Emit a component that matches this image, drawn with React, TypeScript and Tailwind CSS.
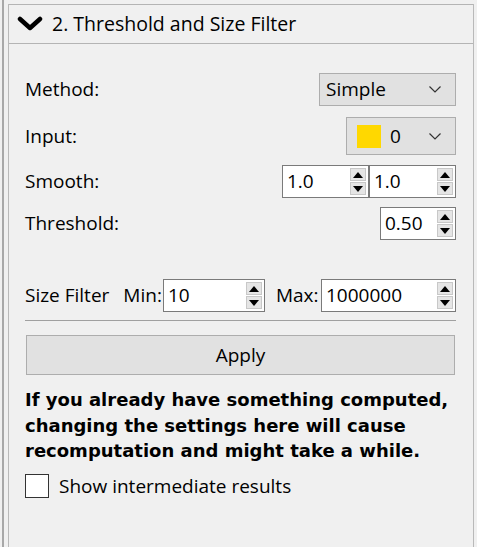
import React from 'react';

const UI = { fontFamily: '"Open Sans", "Noto Sans", sans-serif' };

function SpinButtons() {
  return (
    <div className="flex flex-col w-[18px] h-full py-[2px] pr-[2px] gap-[1px]">
      <div className="flex-1 flex items-center justify-center bg-[#e5e5e5] border border-[#c8c8c8]">
        <svg width="10" height="6" viewBox="0 0 10 6">
          <polygon points="0,6 5,0 10,6" fill="#000" />
        </svg>
      </div>
      <div className="flex-1 flex items-center justify-center bg-[#e5e5e5] border border-[#c8c8c8]">
        <svg width="10" height="6" viewBox="0 0 10 6">
          <polygon points="0,0 10,0 5,6" fill="#000" />
        </svg>
      </div>
    </div>
  );
}

function SpinBox({ value, width }: { value: string; width: string }) {
  return (
    <div className={`flex shrink-0 items-center h-[33px] bg-white border border-[#7a7a7a] ${width}`}>
      <span className="flex-1 pl-[4px] text-[19px] text-black" style={UI}>
        {value}
      </span>
      <SpinButtons />
    </div>
  );
}

function ComboChevron() {
  return (
    <svg width="12" height="7" viewBox="0 0 12 7" className="mr-[14px] shrink-0">
      <polyline points="0.5,0.5 6,6 11.5,0.5" fill="none" stroke="#333" strokeWidth="1.2" />
    </svg>
  );
}

export default function App() {
  return (
    <div className="w-[477px] h-[547px] bg-[#f0f0f0] pl-[2px] overflow-hidden" style={UI}>
      <div className="h-full border-l-2 border-[#a8a8a8] pl-[4px] pt-[4px] pr-[3px]">
        <div className="h-full border-x border-[#b9b9b9] flex flex-col">
          {/* header */}
          <div className="h-[40px] shrink-0 border-y border-[#b4b4b4] flex items-center pl-[8px] gap-[9px]">
            <svg width="26" height="16" viewBox="0 0 26 16">
              <polyline points="3,3 13,12 23,3" fill="none" stroke="#000" strokeWidth="4.5" strokeLinecap="round" strokeLinejoin="round" />
            </svg>
            <span className="text-[19.5px] text-black">2. Threshold and Size Filter</span>
          </div>

          <div className="flex flex-col pl-[16px] pr-[17px]">
            {/* Method */}
            <div className="flex items-center justify-between mt-[29px]">
              <span className="text-[19px] text-black">Method:</span>
              <div className="w-[137px] h-[33px] bg-[#e1e1e1] border border-[#adadad] flex items-center justify-between pl-[6px]">
                <span className="text-[19px] text-black">Simple</span>
                <ComboChevron />
              </div>
            </div>

            {/* Input */}
            <div className="flex items-center justify-between mt-[11px]">
              <span className="text-[19px] text-black">Input:</span>
              <div className="w-[110px] h-[38px] bg-[#e1e1e1] border border-[#adadad] flex items-center pl-[10px]">
                <div className="w-[24px] h-[23px] bg-[#ffd800]" />
                <span className="ml-[9px] flex-1 text-[19px] text-black">0</span>
                <ComboChevron />
              </div>
            </div>

            {/* Smooth */}
            <div className="flex items-center justify-between mt-[10px]">
              <span className="text-[19px] text-black">Smooth:</span>
              <div className="flex">
                <SpinBox value="1.0" width="w-[87px]" />
                <SpinBox value="1.0" width="w-[87px]" />
              </div>
            </div>

            {/* Threshold */}
            <div className="flex items-center justify-between mt-[9px]">
              <span className="text-[19px] text-black">Threshold:</span>
              <SpinBox value="0.50" width="w-[76px]" />
            </div>

            {/* Size filter */}
            <div className="flex items-center whitespace-nowrap mt-[39px]">
              <span className="shrink-0 text-[19px] text-black">Size Filter</span>
              <span className="shrink-0 text-[19px] text-black ml-[14px]">Min:</span>
              <SpinBox value="10" width="w-[102px] ml-[1px]" />
              <span className="shrink-0 text-[19px] text-black ml-[11px]">Max:</span>
              <SpinBox value="1000000" width="w-[135px] ml-auto" />
            </div>

            <div className="h-[2px] border-t border-[#a0a0a0] mt-[8px]" />

            <button className="mt-[13px] h-[40px] bg-[#e1e1e1] border border-[#adadad] text-[19px] text-black ml-[1px] mr-[1px]">
              Apply
            </button>

            <p
              className="mt-[12px] text-[18px] font-bold leading-[25.5px] text-black"
              style={{ fontFamily: '"DejaVu Sans", Verdana, sans-serif' }}
            >
              If you already have something computed, changing the settings here will cause recomputation and might take a while.
            </p>

            <label className="flex items-center mt-[8px]">
              <span className="w-[24px] h-[24px] bg-white border border-[#333]" />
              <span className="ml-[10px] text-[19px] text-black">Show intermediate results</span>
            </label>
          </div>
        </div>
      </div>
    </div>
  );
}
